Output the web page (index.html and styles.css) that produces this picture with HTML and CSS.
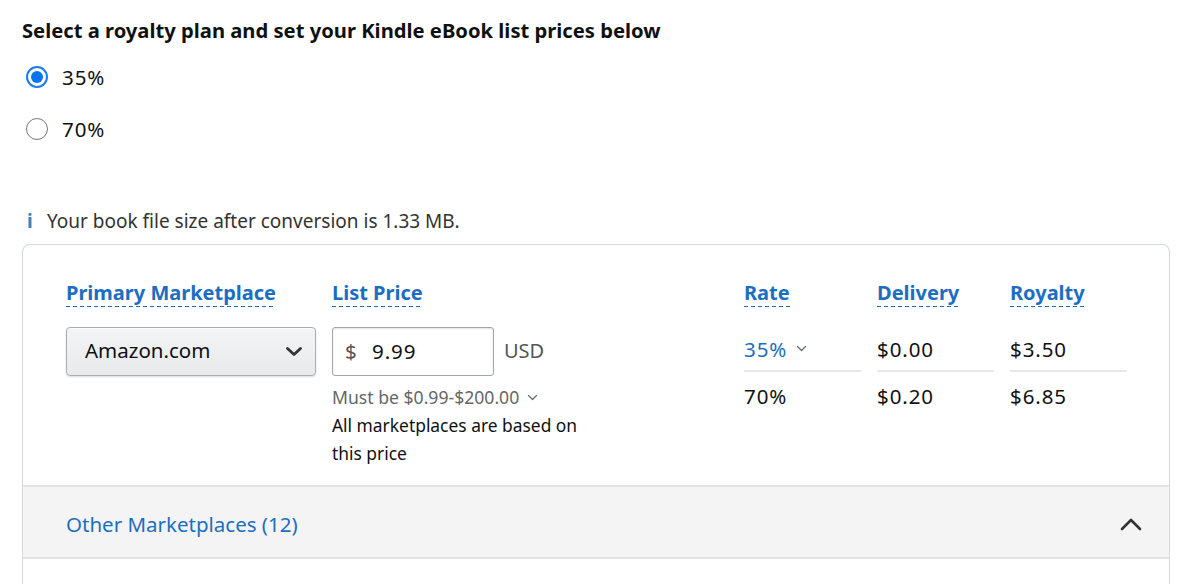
FILE: index.html
```html
<!DOCTYPE html>
<html>
<head>
<meta charset="utf-8">
<link rel="stylesheet" href="styles.css">
</head>
<body>
<div class="page">
  <h2 class="title">Select a royalty plan and set your Kindle eBook list prices below</h2>
  <div class="radios">
    <label class="radio-row"><span class="radio checked"></span><span class="num">35%</span></label>
    <label class="radio-row"><span class="radio"></span><span class="num">70%</span></label>
  </div>
  <div class="info"><span class="info-i">i</span><span>Your book file size after conversion is 1.33 MB.</span></div>
  <div class="box">
    <div class="grid">
      <div class="hdr"><span class="dash">Primary Marketplace</span></div>
      <div class="hdr"><span class="dash">List Price</span></div>
      <div class="hdr"><span class="dash">Rate</span></div>
      <div class="hdr"><span class="dash">Delivery</span></div>
      <div class="hdr"><span class="dash">Royalty</span></div>

      <div class="cell-select">
        <div class="select">
          <span>Amazon.com</span>
          <svg class="sel-chev" width="18" height="11" viewBox="0 0 18 11"><path d="M2.5 2.5 L9 8.5 L15.5 2.5" fill="none" stroke="#333" stroke-width="2.8" stroke-linecap="round" stroke-linejoin="round"/></svg>
        </div>
      </div>
      <div class="cell-price">
        <div class="price-row">
          <div class="input"><span class="cur">$</span><span class="val num">9.99</span></div>
          <span class="usd">USD</span>
        </div>
        <div class="must">Must be $0.99-$200.00
          <svg class="small-chev" width="11" height="7" viewBox="0 0 11 7"><path d="M1.5 1.5 L5.5 5.5 L9.5 1.5" fill="none" stroke="#6b6f6f" stroke-width="1.3" stroke-linecap="round" stroke-linejoin="round"/></svg>
        </div>
        <div class="note">All marketplaces are based on this price</div>
      </div>
      <div class="col">
        <div class="c1 link"><span class="num">35%</span>
          <svg class="small-chev" width="11" height="7" viewBox="0 0 11 7"><path d="M1.5 1.5 L5.5 5.5 L9.5 1.5" fill="none" stroke="#6b6f6f" stroke-width="1.3" stroke-linecap="round" stroke-linejoin="round"/></svg>
        </div>
        <div class="c2 num">70%</div>
      </div>
      <div class="col">
        <div class="c1 num">$0.00</div>
        <div class="c2 num">$0.20</div>
      </div>
      <div class="col">
        <div class="c1 num">$3.50</div>
        <div class="c2 num">$6.85</div>
      </div>
    </div>
    <div class="other">
      <span class="link">Other Marketplaces (12)</span>
      <svg width="24" height="14" viewBox="0 0 24 14"><path d="M3 12 L12 3 L21 12" fill="none" stroke="#333" stroke-width="2.6" stroke-linecap="round" stroke-linejoin="round"/></svg>
    </div>
    <div class="rest"></div>
  </div>
</div>
</body>
</html>
```
FILE: styles.css
```css
* { box-sizing: border-box; }
html, body { margin: 0; padding: 0; background: #fff; }
body {
  font-family: "Noto Sans", "Liberation Sans", Arial, sans-serif;
  color: #0f1111;
  font-size: 19px;
}
.page { padding: 17px 0 0 22px; width: 1170px; }
.title {
  margin: 0;
  font-size: 20.2px;
  line-height: 26px;
  font-weight: 700;
  color: #0f1111;
}
.num { letter-spacing: 0.9px; }
.radios { margin-top: 8px; }
.radio-row {
  display: flex;
  align-items: center;
  height: 52px;
  gap: 14px;
  padding-left: 4px;
  font-size: 20.5px;
}
.radio {
  width: 22px; height: 22px;
  border-radius: 50%;
  border: 1.5px solid #777;
  background: #fff;
  display: inline-block;
  position: relative;
  flex: none;
}
.radio.checked {
  border: 2px solid #1a7cf5;
}
.radio.checked::after {
  content: "";
  position: absolute;
  left: 3px; top: 3px;
  width: 12px; height: 12px;
  border-radius: 50%;
  background: #0b72f0;
}
.info {
  margin-top: 53px;
  display: flex;
  align-items: center;
  gap: 14px;
  height: 26px;
  font-size: 19px;
  color: #333;
  padding-left: 5px;
}
.info-i {
  color: #3189b9;
  font-weight: 700;
  font-size: 19px;
  width: 6px;
}
.box {
  margin-top: 10px;
  width: 1148px;
  border: 1px solid #d5d9d9;
  border-bottom: none;
  border-radius: 8px 8px 0 0;
}
.grid {
  display: grid;
  grid-template-columns: 250px 1fr 117px 117px 117px;
  column-gap: 16px;
  padding: 34px 42px 18px 43px;
}
.hdr {
  height: 48px;
  font-size: 20px;
  font-weight: 700;
  color: #1b6ec2;
  line-height: 28px;
}
.dash {
  display: inline-block;
  padding-bottom: 1px;
  background-image: repeating-linear-gradient(90deg, #1b6ec2 0 4px, transparent 4px 7px);
  background-size: 100% 1.5px;
  background-repeat: no-repeat;
  background-position: 0 100%;
  line-height: 27px;
}
.select {
  height: 49px;
  border: 1px solid #a9adb3;
  border-radius: 4px;
  background: linear-gradient(#f3f4f5, #e8eaec);
  box-shadow: 0 1px 0 rgba(255,255,255,.6) inset, 0 1px 2px rgba(15,17,17,.15);
  display: flex;
  align-items: center;
  justify-content: space-between;
  padding: 0 12px 3px 18px;
  font-size: 20.5px;
  color: #0f1111;
}
.sel-chev { margin-top: 3px; }
.price-row { display: flex; align-items: center; gap: 10px; }
.input {
  width: 162px; height: 49px;
  border: 1px solid #a3a6a6;
  border-radius: 3px;
  box-shadow: 0 1px 2px rgba(15,17,17,.12) inset;
  display: flex;
  align-items: center;
  padding: 0 0 2px 12px;
  font-size: 20.5px;
}
.cur { color: #555; width: 27px; }
.val { color: #0f1111; }
.usd { font-size: 20px; color: #555; padding-bottom: 2px; }
.must {
  margin-top: 7px;
  font-size: 17.6px;
  line-height: 28px;
  color: #666;
  display: flex;
  align-items: center;
  gap: 8px;
}
.note {
  font-size: 17.4px;
  line-height: 28px;
  width: 260px;
  color: #0f1111;
}
.col { display: flex; flex-direction: column; }
.c1, .c2 {
  font-size: 20.5px;
  display: flex;
  align-items: center;
  gap: 9px;
}
.c1 { height: 45px; border-bottom: 2px solid #e7e7e7; padding-top: 0; }
.c2 { height: 50px; padding-bottom: 2px; }
.link { color: #1b6ec2; }
.other {
  height: 74px;
  background: #f4f4f4;
  border-top: 2px solid #e3e3e3;
  border-bottom: 2px solid #e3e3e3;
  display: flex;
  align-items: center;
  justify-content: space-between;
  padding: 3px 26px 0 43px;
  font-size: 20.5px;
}
.rest { height: 40px; }
```
